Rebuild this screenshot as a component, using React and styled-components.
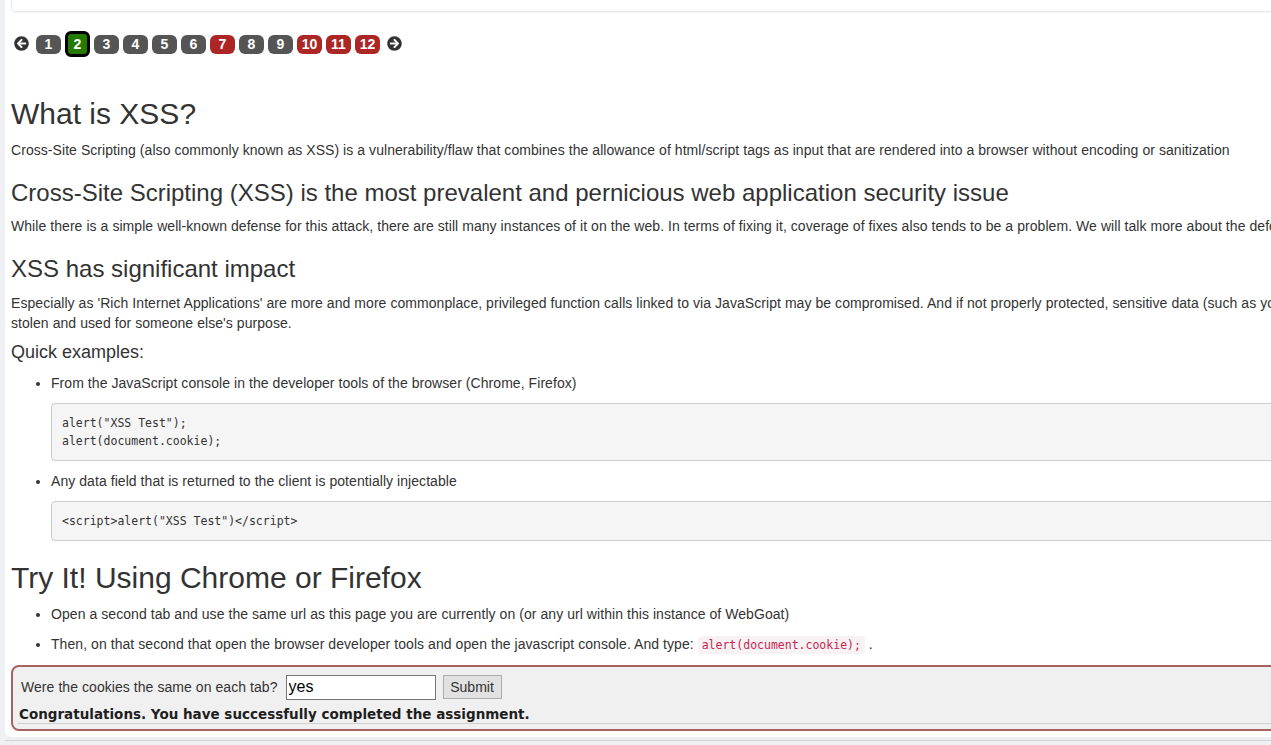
import React from "react";
import styled, { createGlobalStyle } from "styled-components";
import { FaArrowCircleLeft, FaArrowCircleRight } from "react-icons/fa";

const Global = createGlobalStyle`
  html, body { margin: 0; padding: 0; }
  body {
    background: #eef0f4;
    overflow: hidden;
    font-family: "Liberation Sans", Arial, Helvetica, sans-serif;
    font-size: 14px;
    line-height: 20px;
    letter-spacing: 0.06px;
    color: #333;
  }
`;

const Page = styled.div`
  padding-left: 5px;
  width: 1600px;
`;

const Panel = styled.div`
  background: #fff;
  border-radius: 0 0 0 6px;
  padding: 0 0 6px 6px;
  width: 1490px;
`;

const TopCard = styled.div`
  height: 11px;
  border: 1px solid #e9e9ec;
  border-top: none;
  border-radius: 0 0 0 5px;
  box-shadow: 0 1px 2px rgba(0, 0, 0, 0.04);
`;

const Pager = styled.div`
  display: flex;
  align-items: center;
  gap: 4px;
  height: 26px;
  margin: 19px 0 40px;
  padding-left: 3px;
  letter-spacing: 0;
`;

const Arrow = styled.span`
  display: inline-flex;
  color: #333;
  font-size: 15px;
  margin: ${(p) => (p.$side === "left" ? "-1px 3px 0 0" : "-1px 0 0 3px")};
`;

const PageBtn = styled.span`
  display: inline-flex;
  align-items: center;
  justify-content: center;
  box-sizing: border-box;
  width: 25px;
  height: ${(p) => (p.$current ? "26px" : "19px")};
  border-radius: 6px;
  border: ${(p) => (p.$current ? "3px solid #000" : "none")};
  background: ${(p) =>
    p.$current ? "#257a00" : p.$solved ? "#ad2626" : "#555555"};
  color: #fff;
  font: bold 14px "Liberation Sans", Arial, sans-serif;
`;

const H2 = styled.h2`
  font-size: 30px;
  font-weight: 500;
  line-height: 33px;
  margin: 20px 0 10px;
  color: #333;
  letter-spacing: 0;
`;

const H3 = styled.h3`
  font-size: 24px;
  font-weight: 500;
  line-height: 26.4px;
  margin: 20px 0 10px;
  color: #333;
  letter-spacing: 0;
`;

const H4 = styled.h4`
  font-size: 18px;
  font-weight: 500;
  line-height: 19.8px;
  margin: 10px 0 10px;
  color: #333;
  letter-spacing: 0;
`;

const P = styled.p`
  margin: 0 0 10px;
`;

const List = styled.ul`
  margin: 0 0 10px;
  padding-left: 40px;
`;

const Item = styled.li`
  margin: 0;
`;

const Pre = styled.pre`
  margin: 0 0 10px;
  padding: 10px;
  background: #f5f5f5;
  border: 1px solid #ccc;
  border-radius: 4px;
  font-family: "DejaVu Sans Mono", "Liberation Mono", monospace;
  font-size: 11.5px;
  line-height: 18px;
  letter-spacing: 0;
  color: #333;
  white-space: pre;
`;

const Code = styled.code`
  font-family: "DejaVu Sans Mono", "Liberation Mono", monospace;
  font-size: 11.5px;
  letter-spacing: 0;
  padding: 2px 4px;
  color: #c7254e;
  background: #f9f2f4;
  border-radius: 4px;
`;

const AttackBox = styled.div`
  background: #f0f0f0;
  border: 2px solid #a76262;
  border-radius: 8px;
`;

const FormRow = styled.form`
  display: flex;
  align-items: center;
  padding: 8px 8px 0;
  margin: 0;
`;

const Label = styled.span`
  color: #333;
  margin-right: 8px;
`;

const Input = styled.input`
  box-sizing: border-box;
  width: 150px;
  height: 25px;
  border: 1px solid #767676;
  padding: 1px 2px;
  font: 16px "Liberation Sans", Arial, sans-serif;
  color: #000;
  background: #fff;
`;

const Submit = styled.button`
  box-sizing: border-box;
  width: 59px;
  height: 24px;
  margin-left: 7px;
  background: #e1e1e1;
  border: 1px solid #adadad;
  border-radius: 0;
  font: 14px "Liberation Sans", Arial, sans-serif;
  color: #333;
  padding: 0;
`;

const Feedback = styled.div`
  margin-top: 6px;
  padding-left: 6px;
  font: bold 13.5px "DejaVu Sans", Verdana, sans-serif;
  line-height: 16px;
  letter-spacing: 0;
  color: #1e1e1e;
`;

const Rule = styled.div`
  border-top: 1px solid #cfcfcf;
  margin: 1px 0 5px 4px;
`;

const Footer = styled.div`
  margin-top: 3px;
  border-top: 1px solid #d2d2d2;
  height: 20px;
`;

const pages = [
  { n: 1 },
  { n: 2, current: true },
  { n: 3 },
  { n: 4 },
  { n: 5 },
  { n: 6 },
  { n: 7, solved: true },
  { n: 8 },
  { n: 9 },
  { n: 10, solved: true },
  { n: 11, solved: true },
  { n: 12, solved: true },
];

export default function App() {
  return (
    <>
      <Global />
      <Page>
        <Panel>
          <TopCard />
          <Pager>
            <Arrow $side="left">
              <FaArrowCircleLeft />
            </Arrow>
            {pages.map((p) => (
              <PageBtn key={p.n} $current={p.current} $solved={p.solved}>
                {p.n}
              </PageBtn>
            ))}
            <Arrow $side="right">
              <FaArrowCircleRight />
            </Arrow>
          </Pager>

          <H2>What is XSS?</H2>
          <P>
            Cross-Site Scripting (also commonly known as XSS) is a
            vulnerability/flaw that combines the allowance of html/script tags
            as input that are rendered into a browser without encoding or
            sanitization
          </P>
          <H3>
            Cross-Site Scripting (XSS) is the most prevalent and pernicious web
            application security issue
          </H3>
          <P>
            While there is a simple well-known defense for this attack, there
            are still many instances of it on the web. In terms of fixing it,
            coverage of fixes also tends to be a problem. We will talk more
            about the defense in a little bit.
          </P>
          <H3>XSS has significant impact</H3>
          <P>
            Especially as 'Rich Internet Applications' are more and more
            commonplace, privileged function calls linked to via JavaScript may
            be compromised. And if not properly protected, sensitive data (such
            as your authentication cookies) can be stolen and used for someone
            else's purpose.
          </P>
          <H4>Quick examples:</H4>
          <List>
            <Item>
              <P>
                From the JavaScript console in the developer tools of the
                browser (Chrome, Firefox)
              </P>
              <Pre>{`alert("XSS Test");\nalert(document.cookie);`}</Pre>
            </Item>
            <Item>
              <P>
                Any data field that is returned to the client is potentially
                injectable
              </P>
              <Pre>{`<script>alert("XSS Test")</script>`}</Pre>
            </Item>
          </List>

          <H2>Try It! Using Chrome or Firefox</H2>
          <List>
            <Item>
              <P>
                Open a second tab and use the same url as this page you are
                currently on (or any url within this instance of WebGoat)
              </P>
            </Item>
            <Item>
              <P>
                Then, on that second that open the browser developer tools and
                open the javascript console. And type:{" "}
                <Code>alert(document.cookie);</Code> .
              </P>
            </Item>
          </List>

          <AttackBox>
            <FormRow onSubmit={(e) => e.preventDefault()}>
              <Label>Were the cookies the same on each tab?</Label>
              <Input type="text" defaultValue="yes" />
              <Submit type="submit">Submit</Submit>
            </FormRow>
            <Feedback>
              Congratulations. You have successfully completed the assignment.
            </Feedback>
            <Rule />
          </AttackBox>
        </Panel>
        <Footer />
      </Page>
    </>
  );
}
